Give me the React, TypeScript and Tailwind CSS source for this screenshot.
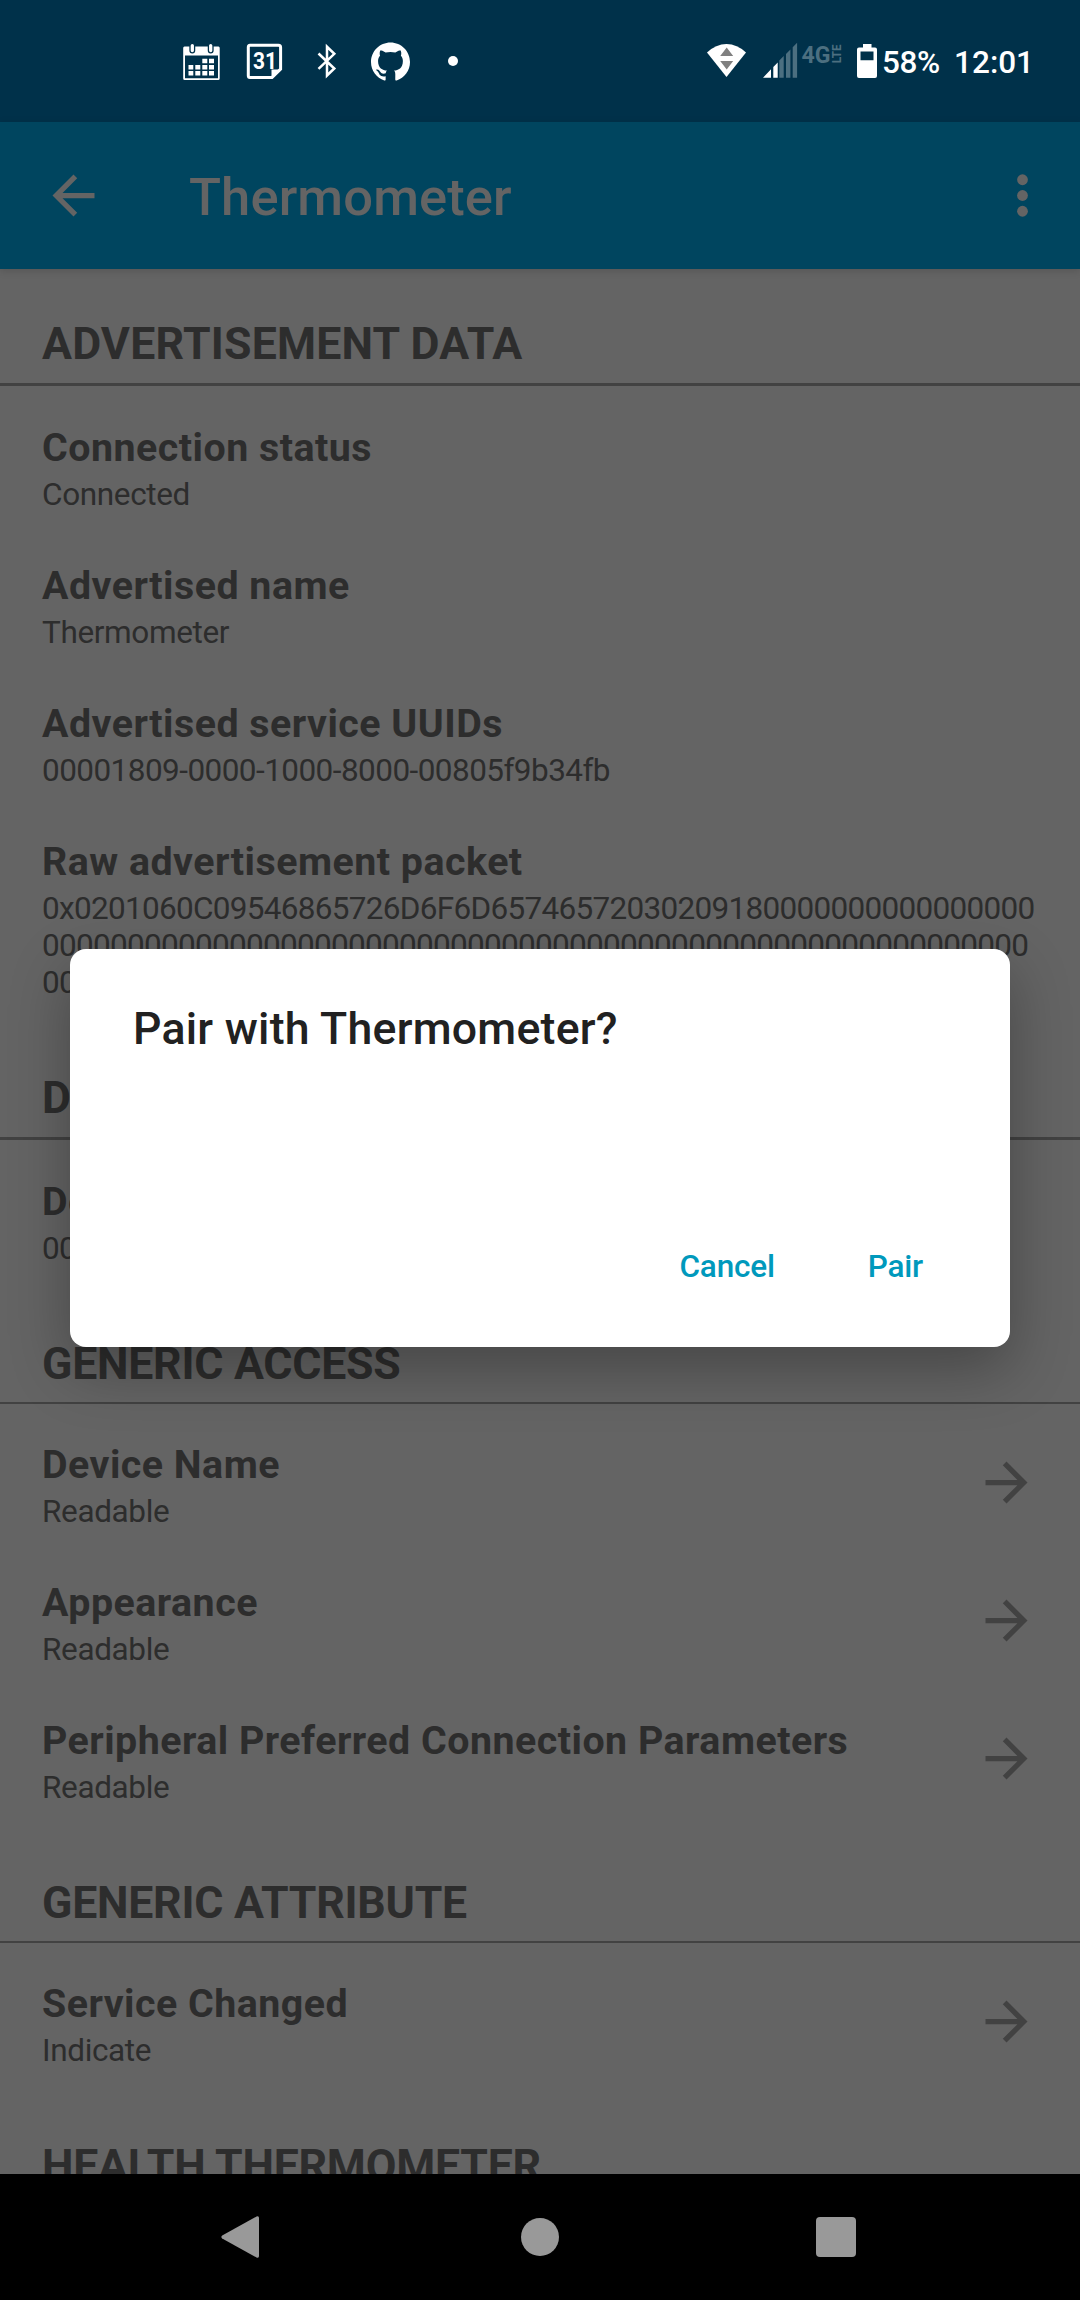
import React from "react";
import { SiGithub } from "react-icons/si";

const RAW = [
  "0x0201060C09546865726D6F6D65746572030209180000000000000000",
  "0000000000000000000000000000000000000000000000000000000000",
  "0000000000",
];

function Header({ text, thin, first, cut }: { text: string; thin?: boolean; first?: boolean; cut?: boolean }) {
  return (
    <div className={first ? "pt-[49px] tracking-[0.2px]" : "pt-[60px] tracking-[-0.24px]"}>
      <h2
        className={
          "border-[#424242] pl-[42px] text-[44.6px] leading-[52px] font-bold whitespace-nowrap " +
          (cut ? "" : thin ? "-mb-px border-b-2 pb-3" : "border-b-3 pb-[13px]")
        }
      >
        {text}
      </h2>
    </div>
  );
}

function Row({
  title,
  lines,
  arrow,
  tracking = "tracking-[-0.36px]",
}: {
  title: string;
  lines: string[];
  arrow?: boolean;
  tracking?: string;
}) {
  return (
    <div className="flex items-start justify-between pb-[11px] pl-[42px]">
      <div className="pt-[38px]">
        <h3 className="text-[39.375px] leading-[47px] font-bold tracking-[0.48px] whitespace-nowrap">{title}</h3>
        <div className={"mt-[5px] text-[31.5px] leading-[37px] whitespace-nowrap " + tracking}>
          {lines.map((l, i) => (
            <p key={i}>{l}</p>
          ))}
        </div>
      </div>
      {arrow && (
        <svg className="mt-12 mr-[42px] size-[63px] shrink-0 fill-[#424242]" viewBox="0 0 24 24">
          <path d="M12 4l-1.41 1.41L16.17 11H4v2h12.17l-5.58 5.59L12 20l8-8z" />
        </svg>
      )}
    </div>
  );
}

function StatusBar() {
  return (
    <header className="flex h-[122px] shrink-0 items-start justify-between bg-[#00314a] text-white">
      <div className="flex pt-10 pl-[180px]">
        <svg className="h-11 w-11 fill-white" viewBox="180 40 44 44">
          <path
            fillRule="evenodd"
            d="M184.500 46.500H218.500Q219.700 46.500 219.700 48V78.500Q219.700 80 218.200 80H184.700Q183.200 80 183.200 78.500V48Q183.200 46.500 184.500 46.500ZM185 55.500V78.300H218V55.500Z"
          />
          <g className="fill-white stroke-[#00314a]" strokeWidth="1.300">
            <rect x="190" y="43.300" width="4.600" height="9.500" rx="2.300" />
            <rect x="208.400" y="43.300" width="4.600" height="9.500" rx="2.300" />
          </g>
          <path d="M202.300 58.700h5v4.600h-5zM209 58.700h5v4.600h-5zM188.500 65h4.800v4.600h-4.800zM195.300 65h5v4.600h-5zM202.300 65h5v4.600h-5zM209 65h5v4.600h-5zM188.500 71h4.800v4.600h-4.800zM195.300 71h5v4.600h-5zM202.300 71h5v4.600h-5zM209 71h5v4.600h-5z" />
        </svg>
        <svg className="ml-5 h-11 w-11" viewBox="244 40 44 44">
          <path d="M250 45.300H278.500Q280.600 45.300 280.600 47.400V69L272 77.500H250Q248.300 77.500 248.300 75.500V47.300Q248.300 45.300 250 45.300Z" fill="none" stroke="#fff" strokeWidth="3" />
          <path d="M271.500 78.500V69.500H281.500Z" fill="#fff" />
          <text x="253" y="68.800" fill="#fff" fontFamily="Roboto" fontWeight="700" fontSize="24" textLength="24" lengthAdjust="spacingAndGlyphs">
            31
          </text>
        </svg>
        <svg className="ml-5 h-11 w-9" viewBox="308 40 36 44">
          <path d="M318.500 53.500L334.300 68.500L327 75.500V46.800L334.300 53.800L318.500 68.800" fill="none" stroke="#fff" strokeWidth="2.500" />
        </svg>
        <SiGithub className="mt-[2px] ml-[27px] size-[39px]" />
        <div className="mt-4 ml-[38px] size-[10px] rounded-full bg-white" />
      </div>
      <div className="flex pt-10 pr-[46px]">
        <svg className="h-10 w-[172px]" viewBox="706 40 172 40">
          <path d="M707 52.500Q716 44 726.500 44T746 52.500L726.500 77Z" fill="#fff" />
          <path d="M726.700 47.500L733.200 56H720.200ZM720.200 61H733.200L726.700 69.500Z" fill="#808080" />
          <path d="M763 77.700L771 69.300V77.700ZM773.300 66.900L777.700 62.500V77.700H773.300Z" fill="#fff" />
          <path d="M779.300 60.500L783.700 56V77.700H779.300ZM786 54L790.400 49.500V77.700H786ZM792.700 47.200L797.100 42.800V77.700H792.700Z" fill="#4c6f80" />
          <text x="801.500" y="62.800" fill="#4c6f80" fontFamily="Roboto" fontWeight="700" fontSize="24.500" textLength="29" lengthAdjust="spacingAndGlyphs">
            4G
          </text>
          <text transform="translate(840.700 63.300) rotate(-90)" fill="#4c6f80" fontFamily="Roboto" fontWeight="700" fontSize="12" textLength="19" lengthAdjust="spacingAndGlyphs">
            LTE
          </text>
          <path fillRule="evenodd" d="M863 44H871.500V47.500H875Q877 47.500 877 49.500V76Q877 78 875 78H859Q857 78 857 76V49.500Q857 47.500 859 47.500H863ZM860.500 51.500V60.300H873.500V51.500Z" fill="#fff" />
        </svg>
        <span className="mt-1 ml-1 w-[57px] text-[31.5px] leading-[37px] font-medium tracking-[-0.4px]">58%</span>
        <span className="mt-1 ml-[15px] text-[31.5px] leading-[37px] font-medium">12:01</span>
      </div>
    </header>
  );
}

export default function App() {
  return (
    <div className="relative flex h-[2300px] w-[1080px] flex-col overflow-hidden bg-[#646464] font-['Roboto',sans-serif] text-[#2d2d2d]">
      <StatusBar />
      <div className="z-10 flex h-[147px] shrink-0 items-center bg-[#00455f] pr-[26px] pl-[42px] text-[#646464] shadow-[0_2px_8px_rgba(0,0,0,0.15)]">
        <svg className="size-[63px] fill-current" viewBox="0 0 24 24">
          <path d="M20 11H7.830l5.590-5.590L12 4l-8 8 8 8 1.410-1.410L7.830 13H20v-2z" />
        </svg>
        <h1 className="mt-[3px] ml-[84px] flex-1 text-[52.5px] leading-[62px] font-medium tracking-[0.13px]">Thermometer</h1>
        <svg className="size-[63px] fill-current" viewBox="0 0 24 24">
          <circle cx="12" cy="6" r="2.050" />
          <circle cx="12" cy="12" r="2.050" />
          <circle cx="12" cy="18" r="2.050" />
        </svg>
      </div>
      <main className="min-h-0 flex-1 overflow-hidden">
        <Header text="ADVERTISEMENT DATA" first />
        <Row title="Connection status" lines={["Connected"]} />
        <Row title="Advertised name" lines={["Thermometer"]} />
        <Row title="Advertised service UUIDs" lines={["00001809-0000-1000-8000-00805f9b34fb"]} tracking="tracking-[-0.55px]" />
        <Row title="Raw advertisement packet" lines={RAW} tracking="tracking-[-0.7px]" />
        <Header text="D" />
        <Row title="De" lines={["00"]} tracking="tracking-[-0.7px]" />
        <Header text="GENERIC ACCESS" thin />
        <Row title="Device Name" lines={["Readable"]} arrow />
        <Row title="Appearance" lines={["Readable"]} arrow />
        <Row title="Peripheral Preferred Connection Parameters" lines={["Readable"]} arrow />
        <Header text="GENERIC ATTRIBUTE" thin />
        <Row title="Service Changed" lines={["Indicate"]} arrow />
        <Header text="HEALTH THERMOMETER" cut />
      </main>
      <nav className="flex h-[126px] shrink-0 items-center justify-between bg-black pr-[224px] pl-[221px]">
        <svg className="h-[42px] w-[39px] fill-[#999999]" viewBox="0 0 39 42">
          <path d="M35.500 0.500Q38 -0.500 38 2V40Q38 42.500 35.500 41.500L1.200 22.500Q-0.500 21 1.200 19.500Z" />
        </svg>
        <div className="ml-1 size-[38px] rounded-full bg-[#999999]" />
        <div className="size-10 rounded-[4px] bg-[#999999]" />
      </nav>
      <div
        role="dialog"
        className="absolute top-[949px] left-[70px] z-20 flex h-[398px] w-[940px] flex-col justify-between rounded-[16px] bg-white shadow-[0_22px_60px_rgba(0,0,0,0.3)]"
      >
        <h2 className="pt-[54px] pl-[63px] text-[44.6px] leading-[52px] font-medium tracking-[0.25px] text-[#212121]">Pair with Thermometer?</h2>
        <div className="flex justify-end gap-[93px] pr-[87px] pb-[62px] text-[31.5px] leading-[37px] font-medium tracking-[-0.2px] text-[#0099bc]">
          <button>Cancel</button>
          <button>Pair</button>
        </div>
      </div>
    </div>
  );
}
